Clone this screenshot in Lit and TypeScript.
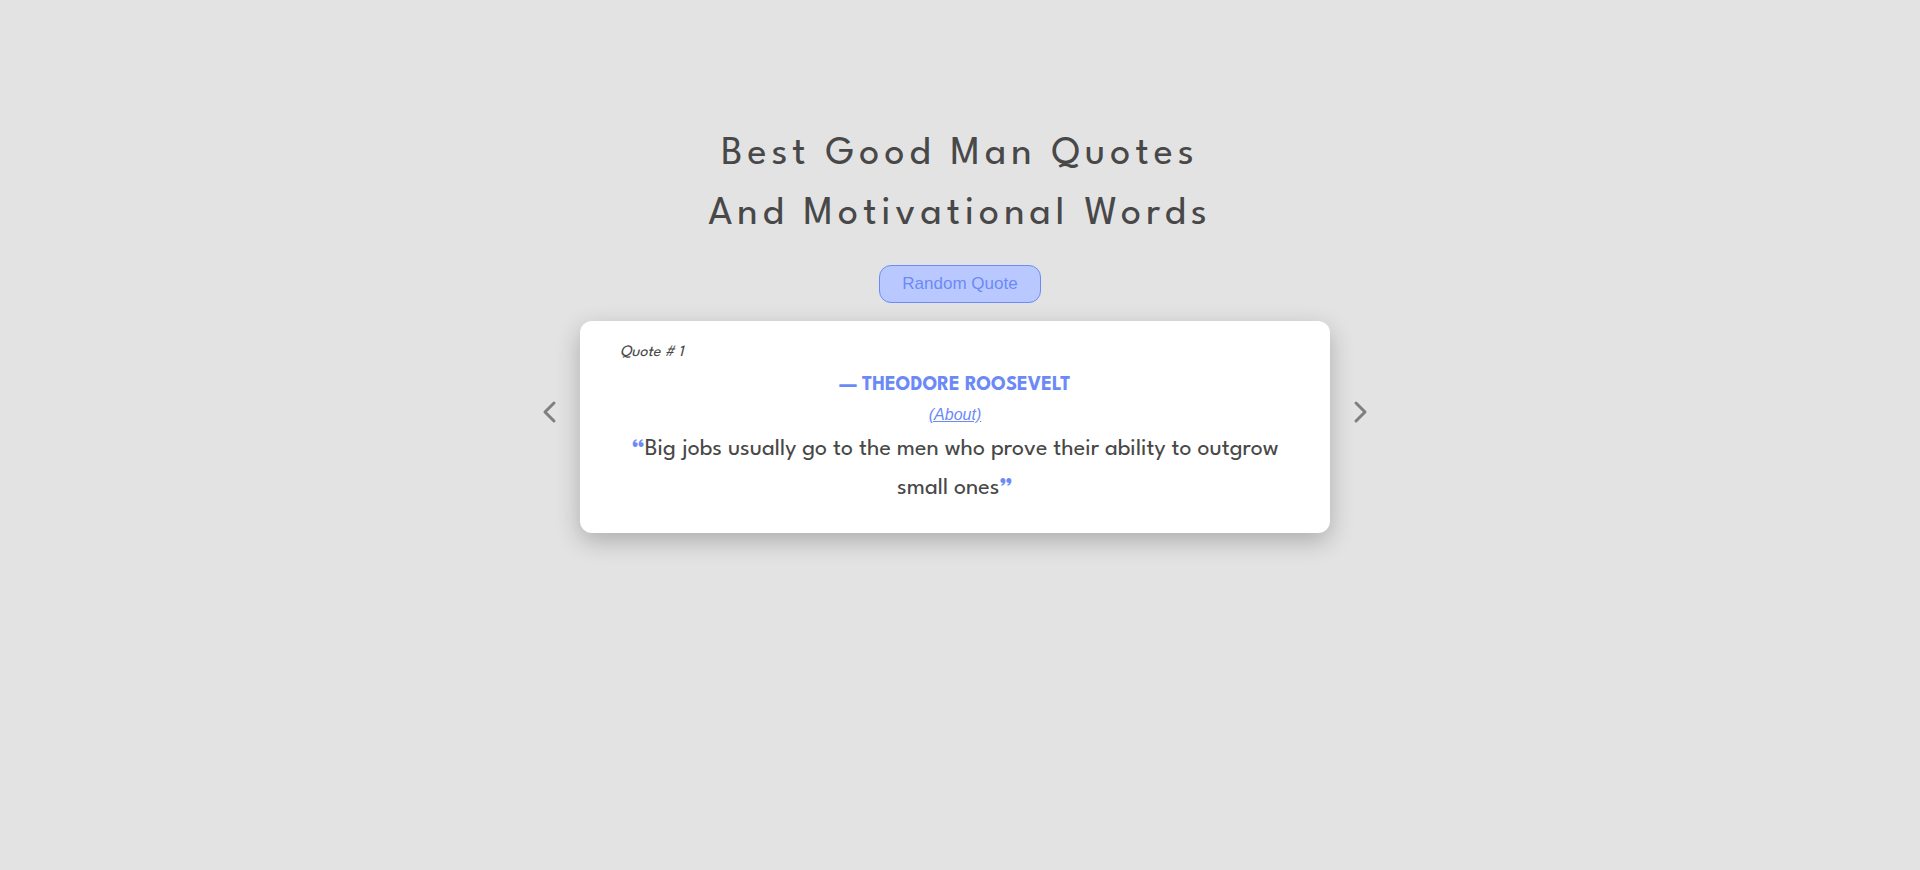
import { LitElement, html, css } from "lit";
import { customElement, state } from "lit/decorators.js";

interface Quote {
  author: string;
  about: string;
  text: string;
}

const QUOTES: Quote[] = [
  {
    author: "Theodore Roosevelt",
    about: "#theodore-roosevelt",
    text: "Big jobs usually go to the men who prove their ability to outgrow small ones",
  },
];

@customElement("app-root")
export class AppRoot extends LitElement {
  @state() private index = 0;

  static styles = css`
    :host {
      display: block;
      box-sizing: border-box;
      min-height: 100vh;
      padding: 125px 16px 32px;
      background: #e3e3e3;
      color: #484848;
      font-family: "League Spartan", Lato, sans-serif;
    }
    .page {
      display: flex;
      flex-direction: column;
      align-items: center;
    }
    .title {
      margin: 0;
      font-size: 40px;
      font-weight: 400;
      line-height: 60px;
      letter-spacing: 5px;
      text-align: center;
    }
    .line {
      display: block;
    }
    .random {
      margin: 20px 0 18px;
      padding: 0 22px;
      height: 38px;
      border: 1px solid #6b8af7;
      border-radius: 12px;
      background: #b9c9ff;
      color: #6b8af7;
      font: 17px "Liberation Sans", Arial, sans-serif;
      cursor: pointer;
    }
    .slider {
      display: flex;
      align-items: center;
      justify-content: center;
      gap: 22px;
      width: 100%;
      padding-right: 10px;
      box-sizing: border-box;
    }
    .arrow {
      display: flex;
      padding: 0;
      margin-bottom: 30px;
      border: 0;
      background: none;
      color: #7f7f7f;
      cursor: pointer;
    }
    .icon {
      width: 16px;
      height: 24px;
      fill: none;
      stroke: currentColor;
      stroke-width: 3;
      stroke-linecap: round;
      stroke-linejoin: round;
    }
    .card {
      box-sizing: border-box;
      width: 100%;
      max-width: 750px;
      padding: 19px 40px 25px;
      border-radius: 12px;
      background: #fff;
      box-shadow: 0 8px 24px rgba(0, 0, 0, 0.24);
      text-align: center;
    }
    .number {
      margin: 0;
      font-size: 16px;
      font-style: italic;
      line-height: 26px;
      text-align: left;
    }
    .author {
      margin: 4px 0 0;
      color: #6b8af7;
      font-size: 20px;
      font-weight: 700;
      line-height: 30px;
      text-transform: uppercase;
    }
    .about {
      display: block;
      width: fit-content;
      margin: 0 auto;
      color: #6b8af7;
      font: italic 16px/30px "Liberation Sans", Arial, sans-serif;
    }
    .text {
      margin: 0;
      font-size: 24px;
      line-height: 39px;
    }
    .mark {
      color: #6b8af7;
      font-weight: 900;
    }
  `;

  private step(by: number) {
    this.index = (this.index + by + QUOTES.length) % QUOTES.length;
  }

  private random() {
    this.index = Math.floor(Math.random() * QUOTES.length);
  }

  render() {
    const quote = QUOTES[this.index];
    return html`
      <main class="page">
        <h1 class="title">
          <span class="line">Best Good Man Quotes</span>
          <span class="line">And Motivational Words</span>
        </h1>
        <button class="random" @click=${this.random}>Random Quote</button>
        <section class="slider">
          <button class="arrow" aria-label="Previous quote" @click=${() => this.step(-1)}>
            <svg class="icon" viewBox="0 0 16 24"><path d="M12 3 3 12l9 9" /></svg>
          </button>
          <article class="card">
            <p class="number">Quote # ${this.index + 1}</p>
            <h2 class="author">— ${quote.author}</h2>
            <a class="about" href=${quote.about}>(About)</a>
            <p class="text"><span class="mark">“</span>${quote.text}<span class="mark">”</span></p>
          </article>
          <button class="arrow" aria-label="Next quote" @click=${() => this.step(1)}>
            <svg class="icon" viewBox="0 0 16 24"><path d="m4 3 9 9-9 9" /></svg>
          </button>
        </section>
      </main>
    `;
  }
}
